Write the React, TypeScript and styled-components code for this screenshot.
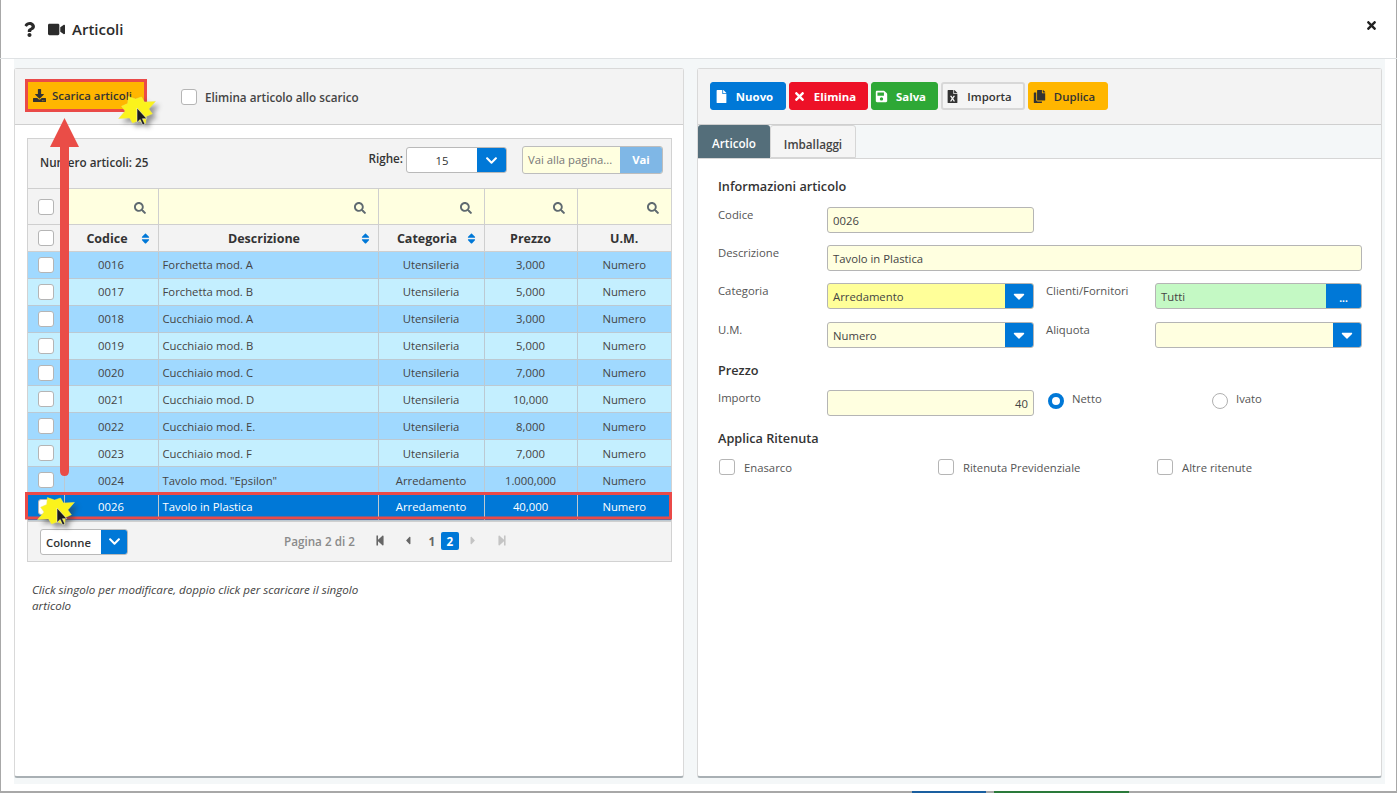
import styled, { createGlobalStyle } from "styled-components";
import {
  FaQuestion, FaVideo, FaDownload, FaFile, FaTimes, FaSave, FaFileExcel, FaCopy, FaSearch,
  FaSort, FaChevronDown, FaCaretDown, FaStepBackward, FaStepForward, FaCaretLeft, FaCaretRight,
} from "react-icons/fa";

const GlobalStyle = createGlobalStyle`
  html, body { margin: 0; padding: 0; background: #fff; }
  body { font-family: "Open Sans", "Liberation Sans", sans-serif; font-size: 11.3px; color: #333; }
  * { box-sizing: border-box; }
`;

const Modal = styled.div`
  position: relative;
  width: 1397px;
  height: 793px;
  background: #fff;
  overflow: hidden;
  display: flex;
  flex-direction: column;
  box-shadow: inset 1px 0 #a8a8a8, inset -1px 0 #a8a8a8;
`;

const Header = styled.header`
  height: 59px;
  flex: none;
  display: flex;
  align-items: center;
  padding: 0 19px 0 22px;
  border-bottom: 1px solid #dfe2e4;
  color: #2b2b2b;
`;

const HeaderIcon = styled.span<{ $size: number; $gap: number }>`
  display: inline-flex;
  font-size: ${(p) => p.$size}px;
  margin-right: ${(p) => p.$gap}px;
`;

const Title = styled.h1`
  margin: 0;
  font-size: 15px;
  font-weight: 600;
  flex: 1;
`;

const Close = styled.span`
  display: inline-flex;
  font-size: 13px;
  margin-top: -7px;
  color: #222;
`;

const Body = styled.main`
  height: 725px;
  flex: none;
  margin: 0 12px 0 14px;
  padding: 9px 0 0;
  background: #f4f7f8;
  display: flex;
  gap: 13px;
  align-items: flex-start;
`;

// quel che resta della pagina sotto al modale
const BehindStrip = styled.div`
  height: 2px;
  margin-top: 7px;
  background: #a8a8a8;
  display: flex;
`;

const BehindPiece = styled.span<{ $left: number; $w: number; $color: string }>`
  margin-left: ${(p) => p.$left}px;
  width: ${(p) => p.$w}px;
  background: ${(p) => p.$color};
`;

const Panel = styled.section<{ $w: number }>`
  width: ${(p) => p.$w}px;
  height: 710px;
  display: flex;
  flex-direction: column;
  background: #fff;
  border: 1px solid #d9d9d9;
  border-bottom: 2px solid #a9b0b4;
  border-radius: 3px;
`;

const Toolbar = styled.div`
  height: 56px;
  flex: none;
  background: #f3f3f3;
  border-bottom: 1px solid #cfcfcf;
  display: flex;
  align-items: flex-start;
`;

const LeftToolbar = styled(Toolbar)`
  padding: 10px 0 0 10px;
  gap: 34px;
`;

const RightToolbar = styled(Toolbar)`
  padding: 13px 0 0 12px;
  gap: 3px;
`;

const Btn = styled.button<{ $bg: string; $fg?: string; $w: number }>`
  width: ${(p) => p.$w}px;
  height: 28px;
  padding: 0 8px 0 0;
  border: 1px solid ${(p) => p.$bg};
  border-radius: 3px;
  background: ${(p) => p.$bg};
  color: ${(p) => p.$fg || "#fff"};
  font: 700 11.4px "Open Sans", sans-serif;
  display: inline-flex;
  align-items: center;
  justify-content: center;
  gap: 8px;
  white-space: nowrap;
  svg { font-size: 13px; }
`;

const PlainBtn = styled(Btn)`
  border-color: #d8d8d8;
  border-width: 2px;
  font-weight: 600;
`;

const DuplicateBtn = styled(Btn)`
  font-weight: 600;
`;

const DownloadBtn = styled(Btn)`
  height: 33px;
  padding: 0 0 0 5px;
  justify-content: flex-start;
  border: 3px solid #ea4a48;
  border-radius: 0;
  color: #333;
  gap: 6px;
  font-size: 11.4px;
  font-weight: 600;
`;

const CheckLabel = styled.label`
  display: flex;
  align-items: center;
  gap: 8px;
  font-size: 11.7px;
  font-weight: 600;
  color: #444;
  margin-top: 10px;
`;

const Check = styled.span`
  display: inline-block;
  width: 16px;
  height: 16px;
  flex: none;
  border: 1px solid #b5b5b5;
  border-radius: 3px;
  background: #fff;
`;

const LeftContent = styled.div`
  flex: 1;
  padding: 13px 12px 0 12px;
`;

const Grid = styled.div`
  width: 645px;
  border: 1px solid #d2d2d2;
  background: #f3f3f3;
`;

const GridTop = styled.div`
  height: 49px;
  display: flex;
  align-items: flex-start;
  padding: 8px 8px 0 12px;
`;

const Count = styled.span`
  font-weight: 600;
  font-size: 11.7px;
  color: #333;
  margin-top: 7px;
  flex: 1;
`;

const RowsLabel = styled.span`
  font-weight: 600;
  font-size: 11.7px;
  margin: 3px 3px 0 0;
`;

const SelectBox = styled.div<{ $w: number }>`
  width: ${(p) => p.$w}px;
  height: 26px;
  display: flex;
  background: #fff;
  border: 1px solid #b9b9b9;
  border-radius: 3px;
  overflow: hidden;
`;

const SelectText = styled.span<{ $center?: boolean; $bold?: boolean }>`
  flex: 1;
  line-height: 25px;
  text-align: ${(p) => (p.$center ? "center" : "left")};
  padding-left: ${(p) => (p.$center ? 0 : 5)}px;
  font-weight: ${(p) => (p.$bold ? 600 : 400)};
`;

const BlueSquare = styled.span<{ $w: number }>`
  width: ${(p) => p.$w}px;
  flex: none;
  background: #0078d7;
  color: #fff;
  display: flex;
  align-items: center;
  justify-content: center;
  font-size: 13px;
`;

const CaretButton = styled(BlueSquare)`
  font-size: 18px;
`;

const MoreButton = styled(BlueSquare)`
  font-size: 10px;
  font-weight: 700;
  padding-top: 3px;
`;

const GoBox = styled.div`
  width: 141px;
  height: 28px;
  margin: -1px 0 0 15px;
  display: flex;
  border: 1px solid #bdbdbd;
  border-radius: 3px;
  overflow: hidden;
  background: #ffffe0;
`;

const GoText = styled.span`
  flex: 1;
  line-height: 26px;
  padding-left: 5px;
  color: #777;
`;

const GoBtn = styled.span`
  width: 42px;
  background: #7fb7e6;
  color: #fff;
  font-weight: 700;
  text-align: center;
  line-height: 26px;
`;

const Table = styled.table`
  width: 643px;
  table-layout: fixed;
  border-collapse: collapse;
`;

const CheckCell = styled.div`
  padding-left: 10px;
  ${Check} { display: block; }
`;

const FilterCell = styled.td`
  height: 36px;
  background: #ffffe0;
  border: 1px solid #cfcfcf;
  text-align: right;
  padding: 0 12px 0 0;
  color: #5f6a70;
  font-size: 12px;
  svg { display: inline-block; vertical-align: middle; }
  &:first-child { background: #f3f3f3; padding: 0; border-left: none; }
  &:last-child { border-right: none; }
`;

const HeadCell = styled.th<{ $sort?: boolean }>`
  height: 27px;
  background: #f3f3f3;
  border: 1px solid #cfcfcf;
  font-size: 12.5px;
  font-weight: 700;
  color: #333;
  padding: 0 ${(p) => (p.$sort ? 8 : 0)}px 0 0;
  text-align: center;
  position: relative;
  &:first-child { padding: 0; border-left: none; }
  &:last-child { border-right: none; }
`;

const SortIcon = styled.span`
  position: absolute;
  right: 6px;
  top: 7px;
  color: #0078d7;
  font-size: 13px;
  display: flex;
`;

const Row = styled.tr<{ $tone: "a" | "b" | "sel" }>`
  background: ${(p) => (p.$tone === "a" ? "#a0d9ff" : p.$tone === "b" ? "#c4efff" : "#0078d7")};
  color: ${(p) => (p.$tone === "sel" ? "#fff" : "#444")};
`;

const Cell = styled.td<{ $left?: boolean }>`
  height: 26.9px;
  padding: ${(p) => (p.$left ? "0 0 0 4px" : "0")};
  text-align: ${(p) => (p.$left ? "left" : "center")};
  border: 1px solid #bcc9d2;
  white-space: nowrap;
  &:first-child { padding: 0; border-left: none; }
  &:last-child { border-right: none; }
`;

const Pager = styled.div`
  height: 40px;
  display: flex;
  align-items: flex-start;
  padding: 7px 0 0 12px;
  border-top: 1px solid #cfcfcf;
`;

const PagerInfo = styled.div`
  margin: 3px 0 0 156px;
  display: flex;
  align-items: center;
  font-weight: 600;
  font-size: 11.7px;
  color: #8a8a8a;
`;

const PagerIcon = styled.span<{ $on?: boolean; $gap: number }>`
  display: inline-flex;
  font-size: 13px;
  width: 10px;
  justify-content: center;
  margin-left: ${(p) => p.$gap}px;
  color: ${(p) => (p.$on ? "#666" : "#c4c4c4")};
`;

const PageNum = styled.span<{ $on?: boolean }>`
  width: 18px;
  height: 18px;
  margin-left: ${(p) => (p.$on ? 0 : 10)}px;
  line-height: 18px;
  text-align: center;
  border-radius: 2px;
  background: ${(p) => (p.$on ? "#0078d7" : "transparent")};
  color: ${(p) => (p.$on ? "#fff" : "#666")};
  font-weight: 700;
`;

const Hint = styled.p`
  width: 345px;
  margin: 20px 0 0 5px;
  font-size: 11.6px;
  line-height: 16px;
  font-style: italic;
  color: #444;
`;

const Tabs = styled.div`
  display: flex;
  height: 34px;
  background: #f4f7f8;
  border-bottom: 1px solid #d6d6d6;
  flex: none;
`;

const Tab = styled.div<{ $on?: boolean }>`
  width: ${(p) => (p.$on ? 72 : 86)}px;
  text-align: center;
  line-height: 36px;
  font-size: 11.7px;
  font-weight: 600;
  background: ${(p) => (p.$on ? "#546e7a" : "#f5f5f5")};
  color: ${(p) => (p.$on ? "#fff" : "#444")};
  border: ${(p) => (p.$on ? "none" : "1px solid #d6d6d6")};
  border-radius: 3px 3px 0 0;
`;

const Form = styled.div`
  padding: 18px 19px 0 20px;
`;

const SectionTitle = styled.h3<{ $top?: number }>`
  margin: ${(p) => p.$top || 0}px 0 0;
  font-size: 12.7px;
  font-weight: 600;
  line-height: 18px;
  color: #333;
`;

const FormRow = styled.div<{ $top: number }>`
  display: flex;
  margin-top: ${(p) => p.$top}px;
  height: 26px;
`;

const FieldLabel = styled.label<{ $w: number; $second?: boolean }>`
  width: ${(p) => p.$w}px;
  flex: none;
  color: #555;
  margin-left: ${(p) => (p.$second ? 12 : 0)}px;
`;

const Input = styled.div<{ $w: number; $bg?: string; $right?: boolean }>`
  width: ${(p) => p.$w}px;
  height: 26px;
  flex: none;
  background: ${(p) => p.$bg || "#ffffe0"};
  border: 1px solid #b5b5b5;
  border-radius: 3px;
  line-height: 26px;
  padding: 0 5px;
  text-align: ${(p) => (p.$right ? "right" : "left")};
  color: #444;
`;

const Combo = styled.div<{ $w: number; $bg?: string }>`
  width: ${(p) => p.$w}px;
  height: 26px;
  flex: none;
  display: flex;
  background: ${(p) => p.$bg || "#ffffe0"};
  border: 1px solid #b5b5b5;
  border-radius: 3px;
  overflow: hidden;
  color: #444;
`;

const ComboText = styled.span`
  flex: 1;
  line-height: 26px;
  padding-left: 5px;
`;

const Radio = styled.span<{ $on?: boolean }>`
  display: inline-block;
  width: 16px;
  height: 16px;
  flex: none;
  margin-top: 2px;
  border-radius: 50%;
  background: #fff;
  border: ${(p) => (p.$on ? "4px solid #0078d7" : "1px solid #b0b0b0")};
`;

const Option = styled.label<{ $w: number }>`
  width: ${(p) => p.$w}px;
  flex: none;
  display: flex;
  align-items: flex-start;
  gap: 8px;
  color: #555;
`;

const CheckOption = styled(Option)`
  align-items: center;
  gap: 9px;
`;

const RadioGroup = styled.div`
  display: flex;
  margin: 1px 0 0 14px;
`;

const CheckRow = styled.div`
  display: flex;
  margin-top: 12px;
  padding-left: 1px;
`;

const Overlay = styled.svg`
  position: absolute;
  left: 0;
  top: 0;
  pointer-events: none;
`;

const StarShadow = styled.polygon`
  fill: #333;
  opacity: 0.5;
  filter: blur(2.5px);
`;

const rows = [
  ["0016", "Forchetta mod. A", "Utensileria", "3,000"],
  ["0017", "Forchetta mod. B", "Utensileria", "5,000"],
  ["0018", "Cucchiaio mod. A", "Utensileria", "3,000"],
  ["0019", "Cucchiaio mod. B", "Utensileria", "5,000"],
  ["0020", "Cucchiaio mod. C", "Utensileria", "7,000"],
  ["0021", "Cucchiaio mod. D", "Utensileria", "10,000"],
  ["0022", "Cucchiaio mod. E.", "Utensileria", "8,000"],
  ["0023", "Cucchiaio mod. F", "Utensileria", "7,000"],
  ["0024", 'Tavolo mod. "Epsilon"', "Arredamento", "1.000,000"],
  ["0026", "Tavolo in Plastica", "Arredamento", "40,000"],
];

// stella gialla con il puntatore, disegnata sopra allo screenshot
const starPoints = (cx: number, cy: number) => {
  const radii = [21, 12, 16, 12, 18, 13, 16, 12, 21, 12, 16, 12, 18, 13, 16, 12];
  return radii
    .map((r, i) => {
      const a = (i / radii.length) * Math.PI * 2 - 0.5;
      return `${(cx + Math.cos(a) * r).toFixed(1)},${(cy + Math.sin(a) * r * 0.85).toFixed(1)}`;
    })
    .join(" ");
};

const Burst = ({ x, y, tipX, tipY }: { x: number; y: number; tipX: number; tipY: number }) => (
  <g>
    <StarShadow points={starPoints(x + 4, y + 4)} />
    <polygon points={starPoints(x, y)} fill="#fbf31c" stroke="#eeea5a" strokeWidth="0.5" />
    <path
      d={`M${tipX} ${tipY}v14.5l3.2-3 2.5 5.5 2.2-1-2.5-5.3h4.4z`}
      fill="#1c1c1c"
      stroke="#fff"
      strokeWidth="0.5"
    />
  </g>
);

export default function App() {
  return (
    <Modal>
      <GlobalStyle />
      <Header>
        <HeaderIcon $size={15} $gap={11}><FaQuestion /></HeaderIcon>
        <HeaderIcon $size={17} $gap={7}><FaVideo /></HeaderIcon>
        <Title>Articoli</Title>
        <Close><FaTimes /></Close>
      </Header>
      <Body>
        <Panel $w={670}>
          <LeftToolbar>
            <DownloadBtn $bg="#ffb600" $w={122}><FaDownload />Scarica articoli</DownloadBtn>
            <CheckLabel><Check />Elimina articolo allo scarico</CheckLabel>
          </LeftToolbar>
          <LeftContent>
            <Grid>
              <GridTop>
                <Count>Numero articoli: 25</Count>
                <RowsLabel>Righe:</RowsLabel>
                <SelectBox $w={101}>
                  <SelectText $center>15</SelectText>
                  <BlueSquare $w={29}><FaChevronDown /></BlueSquare>
                </SelectBox>
                <GoBox>
                  <GoText>Vai alla pagina...</GoText>
                  <GoBtn>Vai</GoBtn>
                </GoBox>
              </GridTop>
              <Table>
                <colgroup>
                  <col width={36} /><col width={94} /><col width={220} /><col width={106} /><col width={93} /><col width={94} />
                </colgroup>
                <tbody>
                  <tr>
                    <FilterCell><CheckCell><Check /></CheckCell></FilterCell>
                    {[0, 1, 2, 3, 4].map((i) => (
                      <FilterCell key={i}><FaSearch /></FilterCell>
                    ))}
                  </tr>
                  <tr>
                    <HeadCell><CheckCell><Check /></CheckCell></HeadCell>
                    <HeadCell $sort>Codice<SortIcon><FaSort /></SortIcon></HeadCell>
                    <HeadCell $sort>Descrizione<SortIcon><FaSort /></SortIcon></HeadCell>
                    <HeadCell $sort>Categoria<SortIcon><FaSort /></SortIcon></HeadCell>
                    <HeadCell>Prezzo</HeadCell>
                    <HeadCell>U.M.</HeadCell>
                  </tr>
                  {rows.map((r, i) => (
                    <Row key={r[0]} $tone={i === 9 ? "sel" : i % 2 ? "b" : "a"}>
                      <Cell><CheckCell><Check /></CheckCell></Cell>
                      <Cell>{r[0]}</Cell>
                      <Cell $left>{r[1]}</Cell>
                      <Cell>{r[2]}</Cell>
                      <Cell>{r[3]}</Cell>
                      <Cell>Numero</Cell>
                    </Row>
                  ))}
                </tbody>
              </Table>
              <Pager>
                <SelectBox $w={88}>
                  <SelectText $bold>Colonne</SelectText>
                  <BlueSquare $w={26}><FaChevronDown /></BlueSquare>
                </SelectBox>
                <PagerInfo>
                  Pagina 2 di 2
                  <PagerIcon $on $gap={20}><FaStepBackward /></PagerIcon>
                  <PagerIcon $on $gap={18}><FaCaretLeft /></PagerIcon>
                  <PageNum>1</PageNum>
                  <PageNum $on>2</PageNum>
                  <PagerIcon $gap={9}><FaCaretRight /></PagerIcon>
                  <PagerIcon $gap={19}><FaStepForward /></PagerIcon>
                </PagerInfo>
              </Pager>
            </Grid>
            <Hint>Click singolo per modificare, doppio click per scaricare il singolo articolo</Hint>
          </LeftContent>
        </Panel>
        <Panel $w={685}>
          <RightToolbar>
            <Btn $bg="#0078d7" $w={76}><FaFile />Nuovo</Btn>
            <Btn $bg="#ed1127" $w={79}><FaTimes />Elimina</Btn>
            <Btn $bg="#2ea836" $w={67}><FaSave />Salva</Btn>
            <PlainBtn $bg="#f5f5f5" $fg="#333" $w={84}><FaFileExcel />Importa</PlainBtn>
            <DuplicateBtn $bg="#ffb600" $fg="#333" $w={80}><FaCopy />Duplica</DuplicateBtn>
          </RightToolbar>
          <Tabs>
            <Tab $on>Articolo</Tab>
            <Tab>Imballaggi</Tab>
          </Tabs>
          <Form>
            <SectionTitle>Informazioni articolo</SectionTitle>
            <FormRow $top={12}>
              <FieldLabel $w={109}>Codice</FieldLabel>
              <Input $w={207}>0026</Input>
            </FormRow>
            <FormRow $top={12}>
              <FieldLabel $w={109}>Descrizione</FieldLabel>
              <Input $w={535}>Tavolo in Plastica</Input>
            </FormRow>
            <FormRow $top={12}>
              <FieldLabel $w={109}>Categoria</FieldLabel>
              <Combo $w={207} $bg="#ffff99">
                <ComboText>Arredamento</ComboText>
                <CaretButton $w={28}><FaCaretDown /></CaretButton>
              </Combo>
              <FieldLabel $w={109} $second>Clienti/Fornitori</FieldLabel>
              <Combo $w={207} $bg="#c4f9c4">
                <ComboText>Tutti</ComboText>
                <MoreButton $w={35}>...</MoreButton>
              </Combo>
            </FormRow>
            <FormRow $top={13}>
              <FieldLabel $w={109}>U.M.</FieldLabel>
              <Combo $w={207}>
                <ComboText>Numero</ComboText>
                <CaretButton $w={28}><FaCaretDown /></CaretButton>
              </Combo>
              <FieldLabel $w={109} $second>Aliquota</FieldLabel>
              <Combo $w={207}>
                <ComboText />
                <CaretButton $w={28}><FaCaretDown /></CaretButton>
              </Combo>
            </FormRow>
            <SectionTitle $top={13}>Prezzo</SectionTitle>
            <FormRow $top={11}>
              <FieldLabel $w={109}>Importo</FieldLabel>
              <Input $w={207} $right>40</Input>
              <RadioGroup>
                <Option $w={164}><Radio $on />Netto</Option>
                <Option $w={120}><Radio />Ivato</Option>
              </RadioGroup>
            </FormRow>
            <SectionTitle $top={13}>Applica Ritenuta</SectionTitle>
            <CheckRow>
              <CheckOption $w={219}><Check />Enasarco</CheckOption>
              <CheckOption $w={219}><Check />Ritenuta Previdenziale</CheckOption>
              <CheckOption $w={120}><Check />Altre ritenute</CheckOption>
            </CheckRow>
          </Form>
        </Panel>
      </Body>
      <BehindStrip>
        <BehindPiece $left={912} $w={74} $color="#1a5fa0" />
        <BehindPiece $left={8} $w={135} $color="#2a7a3a" />
      </BehindStrip>
      <Overlay width="1397" height="793" viewBox="0 0 1397 793">
        <rect x="26.5" y="493.5" width="644" height="24.5" fill="none" stroke="#ea4a48" strokeWidth="3" />
        <path d="M64.5 118 L79 147 L69 147 L69 471 Q69 476 64.5 476 Q60 476 60 471 L60 147 L50 147 Z" fill="#ea4d47" />
        <Burst x={137} y={110} tipX={137} tipY={108} />
        <Burst x={56} y={511} tipX={57} tipY={508} />
      </Overlay>
    </Modal>
  );
}
